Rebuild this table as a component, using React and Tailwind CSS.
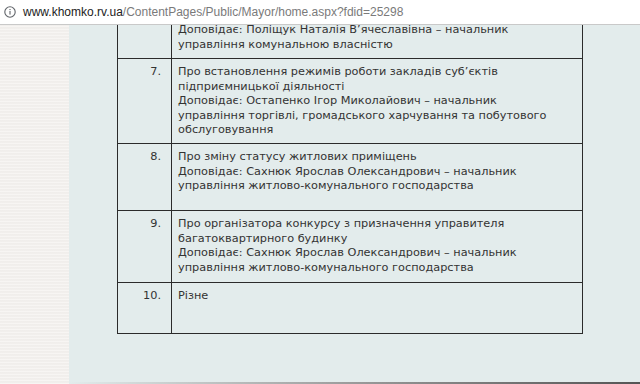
import React from 'react'

const rows = [
  {
    num: '',
    h: 'h-[41px]',
    pt: 'pt-[5px]',
    lines: ['Доповідає: Поліщук Наталія В’ячеславівна – начальник', 'управління комунальною власністю'],
  },
  {
    num: '7.',
    h: 'h-[85px]',
    pt: 'pt-[6px]',
    lines: [
      'Про встановлення режимів роботи закладів суб’єктів',
      'підприємницької діяльності',
      'Доповідає: Остапенко Ігор Миколайович – начальник',
      'управління торгівлі, громадського харчування та побутового',
      'обслуговування',
    ],
  },
  {
    num: '8.',
    h: 'h-[67px]',
    pt: 'pt-[6px]',
    lines: [
      'Про зміну статусу житлових приміщень',
      'Доповідає: Сахнюк Ярослав Олександрович – начальник',
      'управління житлово-комунального господарства',
    ],
  },
  {
    num: '9.',
    h: 'h-[72px]',
    pt: 'pt-[6px]',
    lines: [
      'Про організатора конкурсу з призначення управителя',
      'багатоквартирного будинку',
      'Доповідає: Сахнюк Ярослав Олександрович – начальник',
      'управління житлово-комунального господарства',
    ],
  },
  { num: '10.', h: 'h-[51px]', pt: 'pt-[6px]', lines: ['Різне'] },
]

function InfoIcon() {
  return (
    <svg width="12" height="12" viewBox="0 0 12 12" className="shrink-0">
      <circle cx="6" cy="6" r="5.2" fill="none" stroke="#5f6368" strokeWidth="1.1" />
      <rect x="5.45" y="5" width="1.1" height="3.6" fill="#5f6368" />
      <rect x="5.45" y="3" width="1.1" height="1.1" fill="#5f6368" />
    </svg>
  )
}

export default function App() {
  return (
    <div className="w-[640px] h-[384px] overflow-hidden flex flex-col bg-[#e3ecec] font-['DejaVu_Sans',sans-serif]">
      {/* address bar */}
      <div className="relative z-10 h-[25px] shrink-0 flex items-center gap-[7px] pl-[4px] bg-white border-b border-[#c9c9c9] font-['Liberation_Sans',sans-serif] text-[12px]">
        <InfoIcon />
        <span>
          <span className="text-[#222]">www.khomko.rv.ua</span>
          <span className="text-[#7a7a7a]">/ContentPages/Public/Mayor/home.aspx?fdid=25298</span>
        </span>
      </div>

      <div className="flex flex-1 -mt-[8px]">
        {/* textured side strip */}
        <div className="w-[69px] shrink-0 bg-[#f3f1ef] bg-[repeating-linear-gradient(0deg,#f7f5f3_0px,#f7f5f3_1px,#ece9e6_2px,#f5f3f1_3px)]" />

        {/* content */}
        <div className="flex-1 flex flex-col">
          <div className="pl-[48px]">
            <table className="w-[466px] border-collapse text-[11.3px] leading-[14.5px] text-[#333]">
              <tbody>
                {rows.map((r, i) => (
                  <tr key={i} className={r.h}>
                    <td className={`w-[54px] border border-[#2b2b2b] align-top text-right pr-[10px] ${r.pt}`}>{r.num}</td>
                    <td className={`border border-[#2b2b2b] align-top pl-[6px] ${r.pt}`}>
                      {r.lines.map((l, j) => (
                        <div key={j}>{l}</div>
                      ))}
                    </td>
                  </tr>
                ))}
              </tbody>
            </table>
          </div>
          <div className="flex-1" />
          <div className="h-[2px] bg-gradient-to-r from-[#e3ecec] via-[#9a9a9a] to-[#555]" />
        </div>
      </div>
    </div>
  )
}
